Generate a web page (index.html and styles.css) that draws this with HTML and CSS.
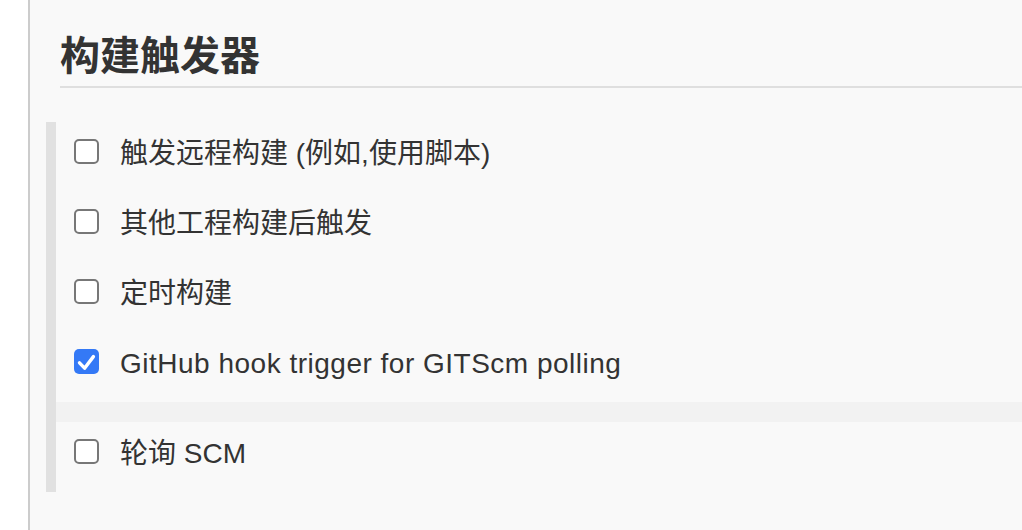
FILE: index.html
```html
<!DOCTYPE html>
<html lang="zh">
<head>
<meta charset="utf-8">
<link rel="stylesheet" href="styles.css">
</head>
<body>
<div class="page">
  <div class="gutter"></div>
  <main class="main">
    <h2 class="title">构建触发器</h2>
    <div class="section">
      <label class="row"><span class="box"></span><span class="label">触发远程构建 (例如,使用脚本)</span></label>
      <label class="row"><span class="box"></span><span class="label">其他工程构建后触发</span></label>
      <label class="row"><span class="box"></span><span class="label">定时构建</span></label>
      <label class="row"><span class="box checked"><svg viewBox="0 0 25 25" width="25" height="25"><path d="M5.5 13.8 L10.6 19.2 L19.4 7.6" fill="none" stroke="#fff" stroke-width="3.4" stroke-linecap="round" stroke-linejoin="round"/></svg></span><span class="label latin">GitHub hook trigger for GITScm polling</span></label>
      <div class="band"></div>
      <label class="row"><span class="box"></span><span class="label">轮询 SCM</span></label>
    </div>
  </main>
</div>
</body>
</html>
```
FILE: styles.css
```css
html, body {
  margin: 0;
  padding: 0;
  background: #ffffff;
}
body {
  font-family: "Liberation Sans", "Noto Sans CJK SC", sans-serif;
  color: #333333;
}
.page {
  display: flex;
  height: 530px;
  overflow: hidden;
}
.gutter {
  width: 28px;
  flex: none;
  background: #ffffff;
}
.main {
  flex: 1;
  background: #f9f9f9;
  border-left: 2px solid #cccccc;
  padding-left: 30px;
}
.title {
  margin: 33px 0 0 0;
  padding-bottom: 13px;
  border-bottom: 2px solid #dfdfdf;
  font-family: "Noto Sans CJK SC", sans-serif;
  font-size: 40px;
  line-height: 40px;
  font-weight: 700;
  color: #333333;
}
.section {
  margin: 34px 0 0 -14px;
  border-left: 10px solid #e1e1e1;
  display: flex;
  flex-direction: column;
}
.row {
  display: flex;
  align-items: center;
  height: 58px;
  padding-bottom: 12px;
  padding-left: 18px;
}
.box {
  width: 25px;
  height: 25px;
  box-sizing: border-box;
  border: 2px solid #777777;
  border-radius: 5px;
  background: #ffffff;
  flex: none;
  display: flex;
}
.box.checked {
  border: none;
  background: #3479f6;
}
.label {
  margin-left: 21px;
  padding-top: 5px;
  font-size: 28px;
  line-height: 34px;
  white-space: nowrap;
}
.label.latin {
  letter-spacing: 0.5px;
}
.band {
  height: 20px;
  background: #f2f2f2;
}
```
